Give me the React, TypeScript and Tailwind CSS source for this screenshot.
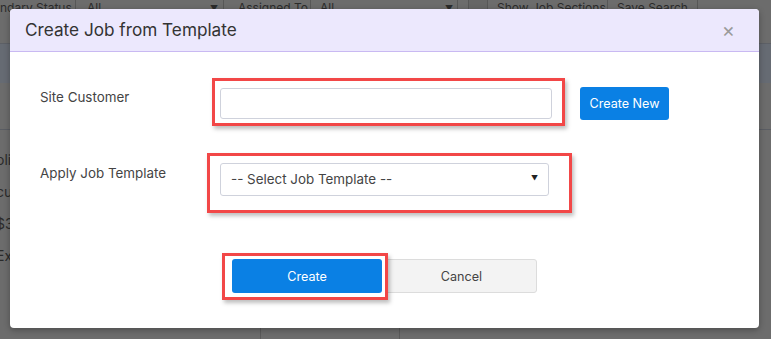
import React from "react";

function Sep() {
  return <span className="shrink-0 w-px h-[14px] bg-[#575757]" />;
}

export default function App() {
  const font = { fontFamily: "Inter, 'Noto Sans', sans-serif" };
  return (
    <div className="relative w-[771px] h-[339px] overflow-hidden bg-[#6c6c6c]" style={font}>
      {/* dimmed background page */}
      <div className="absolute inset-0 flex flex-col">
        <div className="h-[43px] shrink-0">
          <div className="flex items-start h-[14px] text-[12px] leading-[13px] text-[#2b2b2b] whitespace-nowrap">
            <span className="shrink-0 w-[75px] pt-[1px] overflow-hidden">ndary Status</span>
            <Sep />
            <span className="shrink-0 w-[134px] pl-[11px] pt-[1px] overflow-hidden">All</span>
            <span className="shrink-0 w-[13px] pt-[2px] text-[8px]">▼</span>
            <Sep />
            <span className="shrink-0 w-[86px] pl-[14px] pt-[1px] overflow-hidden">Assigned To</span>
            <Sep />
            <span className="shrink-0 w-[134px] pl-[9px] pt-[1px] overflow-hidden">All</span>
            <span className="shrink-0 w-[12px] pt-[2px] text-[8px]">▼</span>
            <Sep />
            <span className="shrink-0 w-[10px] h-[14px]" />
            <Sep />
            <span className="shrink-0 w-[18px] h-[14px] bg-[#666]" />
            <Sep />
            <span className="shrink-0 w-[119px] pl-[9px] pt-[1px] overflow-hidden">Show Job Sections</span>
            <Sep />
            <span className="shrink-0 w-[89px] pl-[9px] pt-[1px] overflow-hidden">Save Search</span>
            <Sep />
          </div>
        </div>
        <div className="h-[40px] shrink-0 bg-[#666b73] border-t border-[#5d6066]" />
        <div className="h-[47px] shrink-0 border-b border-[#5a5d63]" />
        <div className="flex flex-col text-[14px] text-[#2a2a2a] gap-[14px] pt-[21px] -ml-[4px]">
          <span className="leading-[18px]">olin</span>
          <span className="leading-[18px]">cus</span>
          <span className="leading-[18px]">$3</span>
          <span className="leading-[18px]">Ex</span>
        </div>
        <div className="absolute left-[260px] top-[328px] w-px h-[11px] bg-[#5a5a5a]" />
        <div className="absolute left-[399px] top-[328px] w-px h-[11px] bg-[#5a5a5a]" />
      </div>

      {/* modal */}
      <div className="absolute left-[10px] top-[9px] w-[749px] h-[319px] bg-white rounded-[4px] overflow-hidden shadow-[0_2px_6px_rgba(0,0,0,0.3)] flex flex-col">
        <div className="h-[43px] shrink-0 bg-[#ece8fd] border-b-[1.5px] border-[#c9b9f2] flex items-center justify-between pl-[15px] pr-[24px]">
          <span className="text-[17.2px] text-[#333]">Create Job from Template</span>
          <span className="text-[20px] text-[#9a9a9a] leading-none">×</span>
        </div>

        <div className="flex flex-col pl-[30px] pt-[26px]">
          {/* row 1 */}
          <div className="flex items-start">
            <div className="w-[172px] text-[13.4px] text-[#444] pt-[9px]">Site Customer</div>
            <div className="border-[3px] border-[#f24747] shadow-[2px_3px_4px_rgba(0,0,0,0.25)] pl-[5px] pr-[10px] pt-[7px] pb-[4px]">
              <div className="w-[332px] h-[31px] border border-[#cfd2dc] rounded-[3px] bg-white" />
            </div>
            <button className="ml-[15px] mt-[9px] w-[89px] h-[33px] pt-[2px] bg-[#0a80e4] text-white text-[12.6px] rounded-[3px]">
              Create New
            </button>
          </div>

          {/* row 2 */}
          <div className="flex items-start mt-[27px]">
            <div className="w-[167px] text-[13.4px] text-[#444] pt-[10px]">Apply Job Template</div>
            <div className="border-[3px] border-[#f24747] shadow-[2px_3px_4px_rgba(0,0,0,0.25)] pl-[10px] pr-[20px] pt-[7px] pb-[14px]">
              <div className="w-[329px] h-[33px] border border-[#cfd2dc] rounded-[3px] bg-white flex items-center justify-between pl-[10px] pr-[10px]">
                <span className="text-[13.4px] text-[#444]">-- Select Job Template --</span>
                <span className="text-[7px] text-[#222]">▼</span>
              </div>
            </div>
          </div>

          {/* buttons */}
          <div className="flex items-start mt-[40px] ml-[182px]">
            <div className="relative z-10 border-[3px] border-[#f24747] shadow-[2px_3px_4px_rgba(0,0,0,0.25)] pl-[7px] pr-[3px] pt-[3px] pb-[4px] bg-white">
              <button className="w-[150px] h-[34px] pt-[2px] bg-[#0a80e4] text-white text-[12.6px] rounded-[3px]">
                Create
              </button>
            </div>
            <button className="-ml-[14px] mt-[6px] w-[163px] h-[34px] pt-[2px] bg-[#f3f3f3] border border-[#dcdcdc] rounded-[3px] text-[12.6px] text-[#444] pl-[12px]">
              Cancel
            </button>
          </div>
        </div>
      </div>
    </div>
  );
}
